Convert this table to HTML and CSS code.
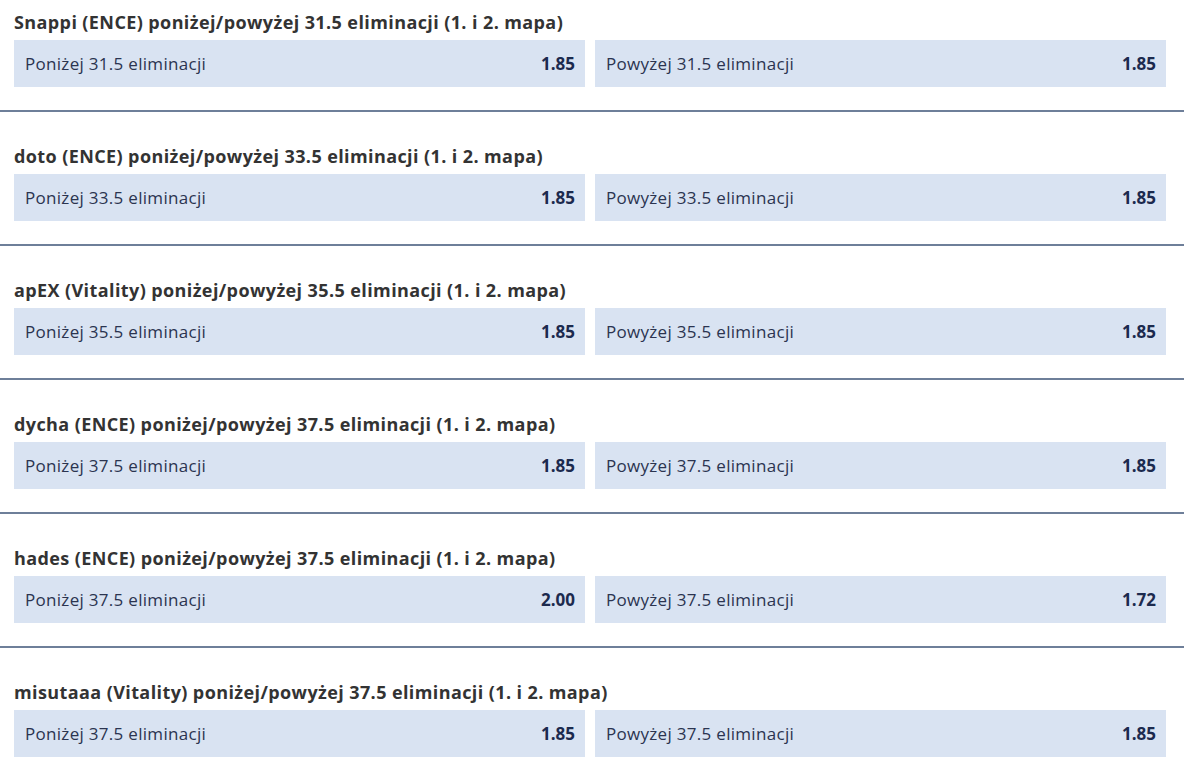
FILE: index.html
```html
<!DOCTYPE html>
<html lang="pl">
<head>
<meta charset="utf-8">
<title>Zakłady - eliminacje</title>
<link rel="stylesheet" href="styles.css">
</head>
<body>
<div class="market-list">
    <div class="market">
        <h3 class="market-title">Snappi (ENCE) poniżej/powyżej 31.5 eliminacji (1. i 2. mapa)</h3>
        <div class="odds-row">
            <a href="#" class="odd"><span class="odd-name">Poniżej 31.5 eliminacji</span><span class="odd-value">1.85</span></a>
            <a href="#" class="odd"><span class="odd-name">Powyżej 31.5 eliminacji</span><span class="odd-value">1.85</span></a>
        </div>
    </div>
    <div class="market">
        <h3 class="market-title">doto (ENCE) poniżej/powyżej 33.5 eliminacji (1. i 2. mapa)</h3>
        <div class="odds-row">
            <a href="#" class="odd"><span class="odd-name">Poniżej 33.5 eliminacji</span><span class="odd-value">1.85</span></a>
            <a href="#" class="odd"><span class="odd-name">Powyżej 33.5 eliminacji</span><span class="odd-value">1.85</span></a>
        </div>
    </div>
    <div class="market">
        <h3 class="market-title">apEX (Vitality) poniżej/powyżej 35.5 eliminacji (1. i 2. mapa)</h3>
        <div class="odds-row">
            <a href="#" class="odd"><span class="odd-name">Poniżej 35.5 eliminacji</span><span class="odd-value">1.85</span></a>
            <a href="#" class="odd"><span class="odd-name">Powyżej 35.5 eliminacji</span><span class="odd-value">1.85</span></a>
        </div>
    </div>
    <div class="market">
        <h3 class="market-title">dycha (ENCE) poniżej/powyżej 37.5 eliminacji (1. i 2. mapa)</h3>
        <div class="odds-row">
            <a href="#" class="odd"><span class="odd-name">Poniżej 37.5 eliminacji</span><span class="odd-value">1.85</span></a>
            <a href="#" class="odd"><span class="odd-name">Powyżej 37.5 eliminacji</span><span class="odd-value">1.85</span></a>
        </div>
    </div>
    <div class="market">
        <h3 class="market-title">hades (ENCE) poniżej/powyżej 37.5 eliminacji (1. i 2. mapa)</h3>
        <div class="odds-row">
            <a href="#" class="odd"><span class="odd-name">Poniżej 37.5 eliminacji</span><span class="odd-value">2.00</span></a>
            <a href="#" class="odd"><span class="odd-name">Powyżej 37.5 eliminacji</span><span class="odd-value">1.72</span></a>
        </div>
    </div>
    <div class="market">
        <h3 class="market-title">misutaaa (Vitality) poniżej/powyżej 37.5 eliminacji (1. i 2. mapa)</h3>
        <div class="odds-row">
            <a href="#" class="odd"><span class="odd-name">Poniżej 37.5 eliminacji</span><span class="odd-value">1.85</span></a>
            <a href="#" class="odd"><span class="odd-name">Powyżej 37.5 eliminacji</span><span class="odd-value">1.85</span></a>
        </div>
    </div>
</div>
</body>
</html>
```
FILE: styles.css
```css
body{
    margin:0;
    background:#fff;
    font-family:"Open Sans", "Noto Sans", sans-serif;
}
.market-list{
    width:1184px;
}
.market{
    padding:32px 18px 23px 14px;
    border-bottom:2px solid #6e7f99;
}
.market:first-child{
    padding-top:10px;
}
.market:last-child{
    border-bottom:none;
}
.market-title{
    margin:0 0 6px 0;
    font-size:18px;
    line-height:24px;
    font-weight:bold;
    color:#333;
    letter-spacing:0.4px;
}
.odds-row{
    display:grid;
    grid-template-columns:1fr 1fr;
    gap:10px;
}
.odd{
    display:flex;
    justify-content:space-between;
    align-items:center;
    height:47px;
    padding:0 10px 0 11px;
    background:#d9e3f2;
    color:#2b3450;
    text-decoration:none;
    font-size:17px;
}
.odd-name{
    letter-spacing:0.3px;
}
.odd-value{
    font-weight:bold;
    color:#1c2a4e;
}
```
